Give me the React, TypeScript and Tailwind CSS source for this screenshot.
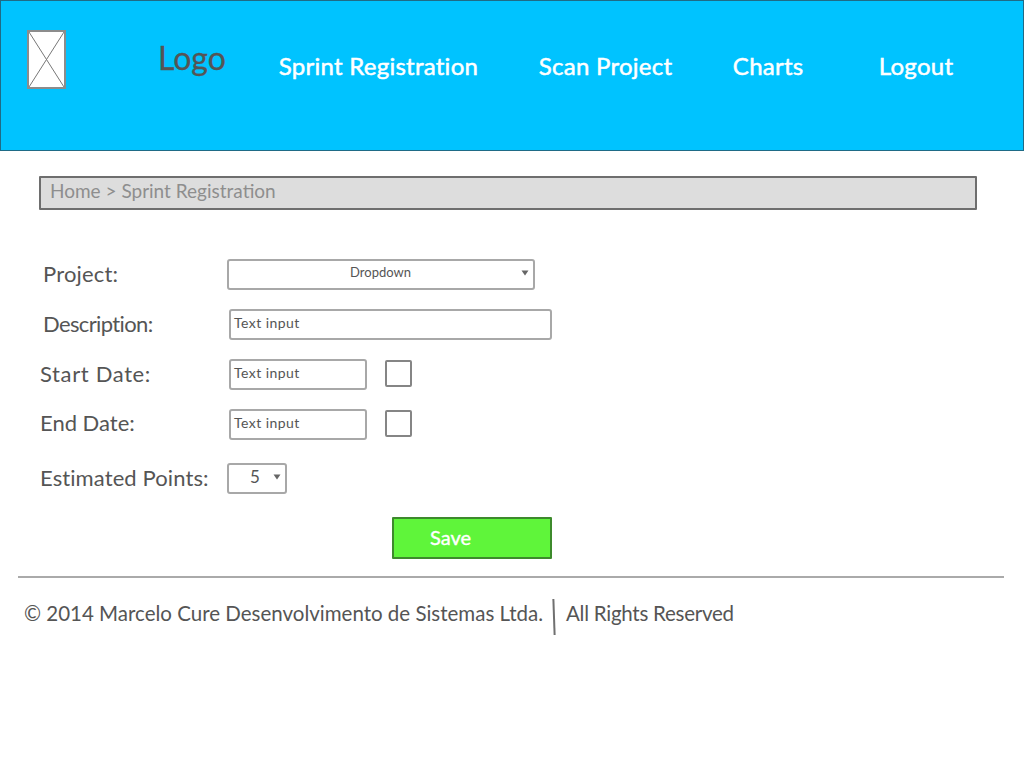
const font = "font-['Lato',sans-serif]";

function Caret() {
	return (
		<svg width="8" height="6" viewBox="0 0 8 6" className="shrink-0">
			<path d="M0.5 0.5H7.5L4 5.5Z" fill="#666666" />
		</svg>
	);
}

function TextInput({ width }: { width: string }) {
	return (
		<div
			className={`flex h-[31px] ${width} items-center rounded-[3px] border-2 border-[#a8a8a8] bg-white pb-[4px] pl-[3px] text-[14px] tracking-[0.45px] text-[#555555]`}
		>
			Text input
		</div>
	);
}

function Checkbox() {
	return <div className="mb-[3px] ml-[18px] h-[27px] w-[27px] rounded-[2px] border-2 border-[#858585] bg-white" />;
}

export default function App() {
	return (
		<div className={`flex h-[768px] w-[1024px] flex-col overflow-hidden bg-white ${font}`}>
			<header className="flex h-[151px] shrink-0 border border-[#1f6b86] bg-[#00c3ff]">
				<div className="ml-[26px] mt-[29px] h-[59px] w-[39px] border-2 border-[#8c8c8c] bg-white">
					<svg width="100%" height="100%" viewBox="0 0 35 55" preserveAspectRatio="none">
						<path d="M0 0L35 55M35 0L0 55" stroke="#777777" strokeWidth="1" fill="none" />
					</svg>
				</div>
				<div className="ml-[92px] mt-[36px] text-[32px] leading-[42px] text-[#555555] [-webkit-text-stroke:0.3px_#555555]">Logo</div>
				<nav className="flex text-[24px] leading-[32px] tracking-[0.25px] text-white [-webkit-text-stroke:0.5px_#ffffff]">
					<a className="ml-[53px] mt-[49px] w-[200px] whitespace-nowrap">Sprint Registration</a>
					<a className="ml-[60px] mt-[49px] w-[133px] whitespace-nowrap">Scan Project</a>
					<a className="ml-[61px] mt-[49px] w-[72px] whitespace-nowrap">Charts</a>
					<a className="ml-[74px] mt-[49px] whitespace-nowrap">Logout</a>
				</nav>
			</header>

			<div className="ml-[39px] mt-[25px] flex h-[34px] w-[938px] items-center rounded-[1px] border-2 border-[#6e6e6e] bg-[#dddddd] pb-[3px] pl-[9px] text-[19px] text-[#8e8e8e]">
				Home &gt; Sprint Registration
			</div>

			<form className="mt-[49px] flex flex-col text-[22px] text-[#555555]">
				<div className="flex h-[31px] items-center">
					<span className="mb-[2px] ml-[43px] w-[184px] tracking-[0.17px]">Project:</span>
					<div className="flex h-[31px] w-[308px] items-center rounded-[3px] border-2 border-[#a8a8a8] bg-white pb-[4px] pr-[4px] text-[13px] text-[#555555]">
						<span className="flex-1 pl-[11px] text-center">Dropdown</span>
						<Caret />
					</div>
				</div>
				<div className="mt-[19px] flex h-[31px] items-center">
					<span className="mb-[2px] ml-[43px] w-[186px] tracking-[-0.63px]">Description:</span>
					<TextInput width="w-[323px]" />
				</div>
				<div className="mt-[19px] flex h-[31px] items-center">
					<span className="mb-[2px] ml-[40px] w-[189px] tracking-[0.64px]">Start Date:</span>
					<TextInput width="w-[138px]" />
					<Checkbox />
				</div>
				<div className="mt-[19px] flex h-[31px] items-center">
					<span className="mb-[4px] ml-[40px] w-[189px]">End Date:</span>
					<TextInput width="w-[138px]" />
					<Checkbox />
				</div>
				<div className="mt-[23px] flex h-[31px] items-center">
					<span className="mb-[2px] ml-[40px] w-[187px] whitespace-nowrap tracking-[0.1px]">Estimated Points:</span>
					<div className="flex h-[31px] w-[60px] items-center rounded-[3px] border-2 border-[#a8a8a8] bg-white pb-[4px] pl-[21px] pr-[4px] text-[17px] text-[#555555]">
						<span className="flex-1">5</span>
						<Caret />
					</div>
				</div>
				<div className="ml-[392px] mt-[23px] flex h-[42px] w-[160px] items-center rounded-[1px] border-2 border-[#3d8a2c] bg-[#5ff53a] pb-[2px] pl-[36px] text-[20px] text-white [-webkit-text-stroke:0.4px_#ffffff]">
					Save
				</div>
			</form>

			<div className="ml-[18px] mt-[17px] h-[2px] w-[986px] bg-[#aaaaaa]" />

			<footer className="ml-[24px] mt-[17px] flex items-start text-[20.5px] leading-[36px] text-[#555555]">
				<span className="whitespace-nowrap">© 2014 Marcelo Cure Desenvolvimento de Sistemas Ltda.</span>
				<span className="ml-[10px] mt-[4px] h-[36px] w-[2px] -rotate-2 bg-[#707070]" />
				<span className="ml-[11px] whitespace-nowrap tracking-[-0.25px]">All Rights Reserved</span>
			</footer>
		</div>
	);
}
